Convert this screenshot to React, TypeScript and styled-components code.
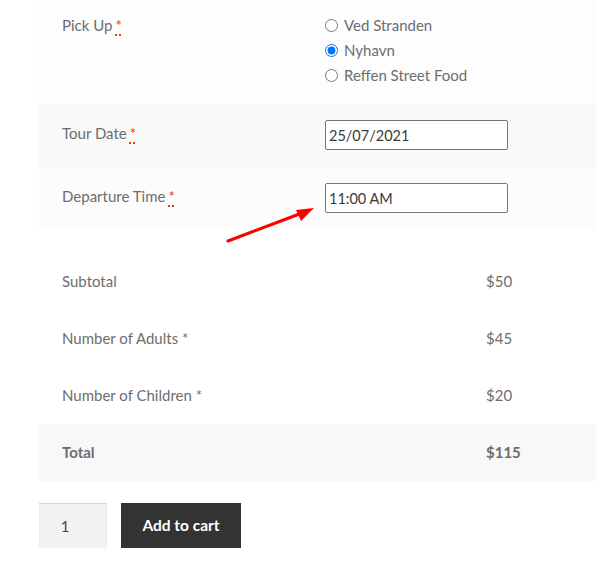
import React from "react";
import styled, { createGlobalStyle } from "styled-components";

const Global = createGlobalStyle`
  html, body { margin: 0; padding: 0; background: #ffffff; }
  body { font-family: "Lato", "Liberation Sans", sans-serif; color: #6d6d6d; }
  * { box-sizing: border-box; }
`;

const Page = styled.div`
  position: relative;
  width: 596px;
  height: 576px;
  padding-left: 39px;
  overflow: hidden;
`;

const FormRow = styled.div<{ $bg: string; $pt: number; $pb: number }>`
  display: grid;
  grid-template-columns: 286px 1fr;
  background: ${(p) => p.$bg};
  padding: ${(p) => p.$pt}px 0 ${(p) => p.$pb}px 0;
`;

const Label = styled.div<{ $pt?: number }>`
  padding-left: 23px;
  padding-top: ${(p) => p.$pt ?? 0}px;
  font-size: 15px;
  line-height: 25px;
  color: #6d6d6d;
`;

const Req = styled.abbr`
  color: #ff2a00;
  text-decoration: underline dotted #e2401c;
  text-underline-offset: 3px;
  text-decoration-thickness: 2px;
  margin-left: 3px;
`;

const RadioList = styled.div`
  display: flex;
  flex-direction: column;
`;

const RadioItem = styled.label`
  display: flex;
  align-items: center;
  height: 25px;
  font-size: 15px;
  color: #6d6d6d;
  input {
    margin: 1px 6px 0 0;
    width: 13px;
    height: 13px;
  }
`;

const TextInput = styled.input`
  width: 183px;
  height: 30px;
  border: 1px solid #767676;
  border-radius: 2px;
  padding: 0 3px;
  font-family: "Lato", "Liberation Sans", sans-serif;
  font-size: 14.5px;
  color: #3a3a3a;
  background: #fff;
  outline: none;
`;

const Totals = styled.div`
  margin-top: 24px;
  display: flex;
  flex-direction: column;
`;

const TotalRow = styled.div<{ $strong?: boolean }>`
  display: grid;
  grid-template-columns: 447px 1fr;
  height: 57px;
  padding-bottom: 2px;
  align-items: center;
  background: ${(p) => (p.$strong ? "#f8f8f8" : "transparent")};
  font-size: 15px;
  font-weight: ${(p) => (p.$strong ? 700 : 400)};
  color: #6d6d6d;
`;

const Cell = styled.div<{ $pl?: number }>`
  padding-left: ${(p) => p.$pl ?? 0}px;
`;

const CartBar = styled.div`
  margin-top: 22px;
  display: flex;
  gap: 14px;
`;

const Qty = styled.input`
  width: 68px;
  height: 45px;
  border: none;
  background: #f2f2f2;
  box-shadow: inset 0 1px 1px rgba(0, 0, 0, 0.125);
  text-align: center;
  padding: 0 16px 0 0;
  font-family: "Lato", "Liberation Sans", sans-serif;
  font-size: 15px;
  color: #43454b;
  outline: none;
`;

const CartButton = styled.button`
  width: 120px;
  height: 45px;
  border: none;
  background: #333333;
  color: #ffffff;
  font-family: "Lato", "Liberation Sans", sans-serif;
  font-weight: 700;
  font-size: 15.5px;
  padding-bottom: 2px;
  cursor: pointer;
`;

const Arrow = styled.svg`
  position: absolute;
  left: 220px;
  top: 200px;
`;

export default function App() {
  return (
    <>
      <Global />
      <Page>
        <FormRow $bg="#fdfdfd" $pt={12} $pb={16}>
          <Label $pt={1}>
            Pick Up<Req title="required">*</Req>
          </Label>
          <RadioList>
            <RadioItem>
              <input type="radio" name="pickup" /> Ved Stranden
            </RadioItem>
            <RadioItem>
              <input type="radio" name="pickup" defaultChecked /> Nyhavn
            </RadioItem>
            <RadioItem>
              <input type="radio" name="pickup" /> Reffen Street Food
            </RadioItem>
          </RadioList>
        </FormRow>
        <FormRow $bg="#f9f9f9" $pt={17} $pb={17}>
          <Label $pt={1}>
            Tour Date<Req title="required">*</Req>
          </Label>
          <div>
            <TextInput type="text" defaultValue="25/07/2021" />
          </div>
        </FormRow>
        <FormRow $bg="#fcfcfc" $pt={16} $pb={16}>
          <Label $pt={1}>
            Departure Time<Req title="required">*</Req>
          </Label>
          <div>
            <TextInput type="text" defaultValue="11:00 AM" />
          </div>
        </FormRow>

        <Totals>
          <TotalRow>
            <Cell $pl={23}>Subtotal</Cell>
            <Cell>$50</Cell>
          </TotalRow>
          <TotalRow>
            <Cell $pl={23}>Number of Adults *</Cell>
            <Cell>$45</Cell>
          </TotalRow>
          <TotalRow>
            <Cell $pl={23}>Number of Children *</Cell>
            <Cell>$20</Cell>
          </TotalRow>
          <TotalRow $strong>
            <Cell $pl={23}>Total</Cell>
            <Cell>$115</Cell>
          </TotalRow>
        </Totals>

        <CartBar>
          <Qty type="text" defaultValue="1" />
          <CartButton>Add to cart</CartButton>
        </CartBar>

        <Arrow width="100" height="50" viewBox="0 0 100 50">
          <line x1="8" y1="41" x2="82" y2="13" stroke="#ff0000" strokeWidth="3.2" strokeLinecap="round" />
          <polygon points="94,8 76,10 81,21" fill="#ff0000" />
        </Arrow>
      </Page>
    </>
  );
}
